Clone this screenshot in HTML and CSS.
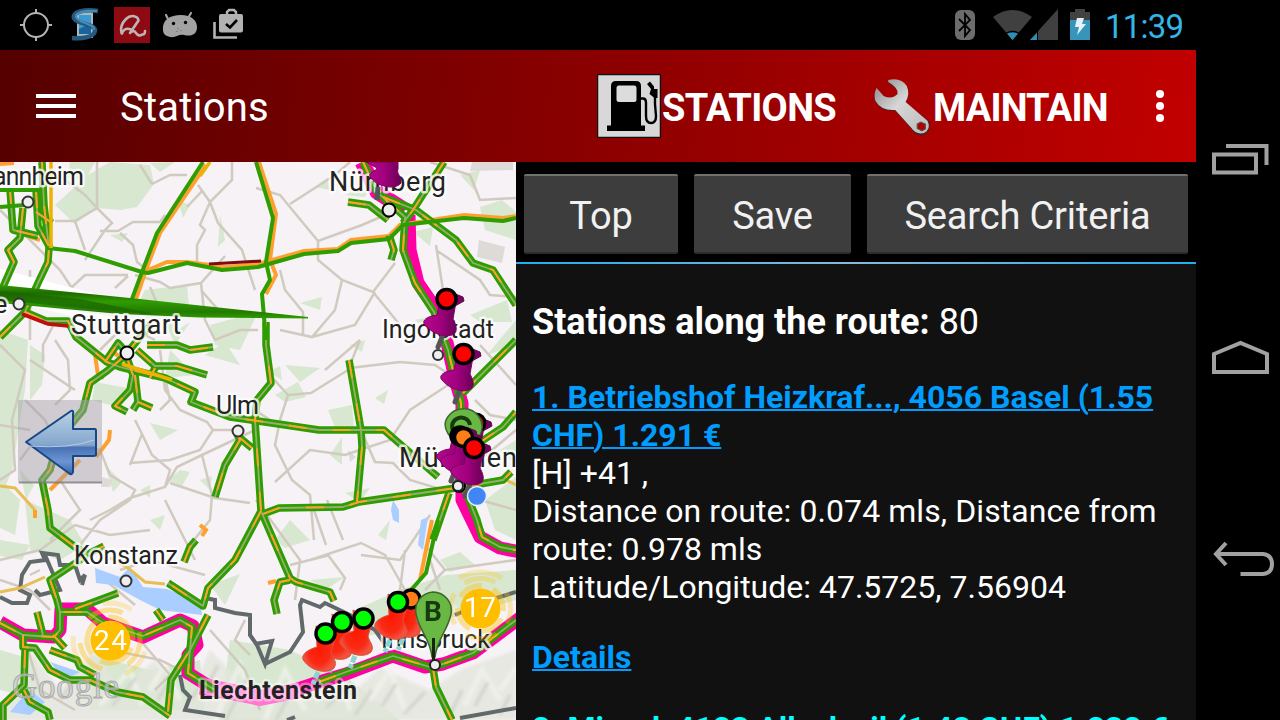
FILE: index.html
```html
<!DOCTYPE html>
<html lang="en">
<head>
<meta charset="utf-8">
<title>Stations</title>
<link rel="stylesheet" href="styles.css">
</head>
<body>
<div class="device">
  <div class="screen">
    <div class="status">
      <svg class="status-left" viewBox="0 0 260 50" width="260" height="50">
        <g fill="none" stroke="#b4b4b4" stroke-width="2"><circle cx="36" cy="25" r="12"/><path d="M36 9v5M36 36v5M20 25h5M47 25h5"/></g>
        <rect x="77" y="12" width="16" height="26" fill="#aab8c0"/><rect x="79" y="15" width="12" height="19" fill="#17659c"/><path d="M79 15h12v8l-12 6z" fill="#3d9ad0"/>
        <path d="M98 11C84 9 72 12 74 18C77 25 96 23 95 31C94 37 83 39 72 38" fill="none" stroke="#26587e" stroke-width="4.5"/>
        <path d="M97 11C84 10 75 13 76 17C79 24 95 23 94 30" fill="none" stroke="#4589b5" stroke-width="2.2"/>
        <rect x="114" y="7" width="36" height="36" fill="#8e0a12"/>
        <path d="M122 33.500L121.500 33C120 28 122 23 126 19C131 14 138 16 138.500 20.500L130 33M122 33Q125 27 131 29.500M131 32Q134 30 136 33Q139 37 142 34.500Q145 35 145 31" fill="none" stroke="#bdb5b4" stroke-width="2.600" stroke-linecap="round" stroke-linejoin="round"/>
        <path d="M163 30C162 20 170 15 181 15C191 15 197 20 197 27C197 34 192 37 184 35C178 34 176 38 170 37C166 36 163 34 163 30Z" fill="#a2a2a2"/><path d="M169 21l-3-6M188 18l3-5" stroke="#a2a2a2" stroke-width="2.2" stroke-linecap="round"/><circle cx="173.500" cy="23.500" r="1.700"/><circle cx="185.500" cy="22.500" r="1.700"/><path d="M178 28v1M181 30v1M177 31v1" stroke="#666"/>
        <rect x="219" y="14" width="24" height="18.500" rx="2" fill="#b2b2b2"/><path d="M227 15v-3l2-2h5l2 2v3" fill="none" stroke="#b2b2b2" stroke-width="2.5"/><path d="M214.500 22v15.500H237" fill="none" stroke="#b2b2b2" stroke-width="2.600"/><path d="M226 24l4 3.500L237 20" fill="none" stroke="#000" stroke-width="2.600"/>
      </svg>
      <svg class="status-right" viewBox="950 0 144 50" width="144" height="50">
        <rect x="955" y="10" width="20" height="30" rx="6" fill="#6c6c6c"/><path d="M959 19l11 11l-5 6V14l5 6l-11 11" fill="none" stroke="#000" stroke-width="1.800"/>
        <path d="M993 17Q1012 3 1032 17L1012.500 40Z" fill="#404040"/><path d="M1007 33.500Q1012.500 30.500 1018 33.500L1012.500 40Z" fill="#2b90b8"/><path d="M1006.500 33Q1012.500 30 1018.500 33" fill="none" stroke="#000" stroke-width="1.300"/>
        <path d="M1030 40L1058 9V40Z" fill="#404040"/><path d="M1030 40L1037 33V40Z" fill="#2b90b8"/><path d="M1037.500 31v10" stroke="#000"/>
        <path d="M1070 12h5V9h10v3h5v9h-20z" fill="#424242"/><path d="M1070 20h20v20h-20z" fill="#3795bb"/><path d="M1077 18h7l-2 6h4l-9 11l2-8h-4z" fill="#e4f1f6"/>
      </svg>
      <span class="clock">11:39</span>
    </div>
    <div class="toolbar">
      <svg class="menu" viewBox="0 0 40 24" width="40" height="24"><path d="M0 2h40M0 12h40M0 22h40" stroke="#fff" stroke-width="4"/></svg>
      <h1 class="title">Stations</h1>
      <div class="action">
        <svg viewBox="0 0 64 64" width="64" height="64"><rect x=".5" y=".5" width="63" height="63" fill="#d8d8d8" stroke="#111" stroke-width="1.500"/><path d="M10 51.500h4V12q0-5 5-5h20q5 0 5 5v39.500h4V57H10z"/><rect x="19.500" y="11.500" width="20" height="16.500" rx="2.500" fill="#dcdcdc"/><path d="M43 24.500h3q3 0 3 4V42q0 7 5 7t5-7l-1-12V20" fill="none" stroke="#000" stroke-width="2.400"/><path d="M50 10l3-2.500 4 5v2.500h3.500v9h-3l-5-4 1.500-5z"/></svg>
        <span class="label-stations">STATIONS</span>
      </div>
      <div class="action action-maintain">
        <svg viewBox="0 0 60 60" width="60" height="60"><defs><linearGradient id="steel" x2="1" y2="1"><stop offset=".1" stop-color="#999"/><stop offset=".45" stop-color="#d6d6d6"/><stop offset="1" stop-color="#bbb"/></linearGradient></defs><g transform="translate(-1 1) scale(1.160 1)"><path d="M14 4Q25 1 30 10Q33 18 29 26L49 44Q52 53 45 58Q37 60 34 52L20 34Q8 35 3 25Q1 18 4 12L11 21Q18 24 22 18Q23 12 14 6Z" fill="#4b2020"/><path d="M14 3Q25 0 30 9Q33 17 29 25L48 44Q51 52 45 56Q38 58 34 51L20 33Q8 34 3 24Q1 17 4 11L10 19Q17 23 22 17Q23 11 14 5Z" fill="url(#steel)"/><path d="M39 47l3-2 4 2v5l-3 2-4-2.500z" fill="#b00000" stroke="#555"/></g></svg>
        <span class="label-maintain">MAINTAIN</span>
      </div>
      <svg class="overflow" viewBox="0 0 8 32" width="8" height="32"><g fill="#fff"><circle cx="4" cy="4" r="4"/><circle cx="4" cy="16" r="4"/><circle cx="4" cy="28" r="4"/></g></svg>
    </div>
    <div class="content">
      <svg class="map" viewBox="0 162 516 558" width="516" height="558">
        <defs>
          <linearGradient id="wedge" x2="0" y2="1"><stop offset="0" stop-color="#2f9d00"/><stop offset=".25" stop-color="#1f6b00"/><stop offset=".5" stop-color="#2f9d00"/><stop offset=".8" stop-color="#237a00"/><stop offset="1" stop-color="#2f9d00"/></linearGradient>
          <linearGradient id="arrow" x2="0" y2="1"><stop offset="0" stop-color="#b9d3e6"/><stop offset=".54" stop-color="#84a5cc"/><stop offset=".58" stop-color="#4972b4"/><stop offset=".8" stop-color="#6d95d6"/><stop offset="1" stop-color="#3a66ac"/></linearGradient>
          <linearGradient id="purple"><stop offset="0" stop-color="#b3098d"/><stop offset=".5" stop-color="#a3007f"/><stop offset="1" stop-color="#6a0053"/></linearGradient>
          <radialGradient id="red"><stop offset="0" stop-color="#ff1800"/><stop offset=".7" stop-color="#f92a16"/><stop offset="1" stop-color="#f2513d"/></radialGradient>
          <filter id="relief"><feGaussianBlur stdDeviation="1.500"/></filter>
          <g id="roads">
            <path d="M25 312L46 321L68 321L76 337L107 362L120 367L165 378L195 392L191 402L230 417L258 421L319 430L384 430L438 477"/>
            <path d="M127 354L107 371L90 383L83 410L58 440L50 470L42 480L48 510L50 528L75 547L88 554L104 546"/>
            <path d="M86 556L50 580L57 600L60 612M147 345L177 345L190 350L213 347M137 350L155 366L177 366L207 375M127 358L133 375L130 390L115 406L127 412M135 375L138 402L133 410M138 402L152 408M105 362L118 343L127 353L150 325M150 378L155 368"/>
            <path d="M237 434L240 440L225 465L215 497M240 438L252 448"/>
            <path d="M266 322L266 345L271 383L257 400L255 420L261 511L290 578L296 582L330 592L334 601M290 580L280 582L274 600L277 614M261 511L235 560L208 588L203 606L168 583"/>
            <path d="M208 615L190 650L171 680L168 712M263 514L279 508L343 507L359 502L456 488M349 360L361 430L362 447L357 502"/>
            <path d="M463 393L476 380L516 340M479 443L503 427L516 412M463 487L503 480L511 472M449 493L433 540M389 235L394 250L391 260M383 197L416 210L456 240L473 263L493 270L516 305M348 202L369 205L388 220"/>
            <path d="M444 162L413 210L403 223M363 162L377 192L405 217L403 250L415 283L434 312L448 350L456 383L461 403L461 480L477 520L482 537L500 547L516 550"/>
            <path d="M0 623L23 635L54 637L60 630L60 612L87 612L103 623L143 636L180 620L192 627L188 673L215 690M319 682L346 672L393 656L430 667L443 664L473 653L516 620M433 668L436 687L452 720"/>
            <path d="M23 635L23 647L35 648L50 670L70 680L90 680L117 692L143 697L170 716M25 650L24 685L3 705V720M24 690L30 702L48 712L50 720M50 650L77 660L80 667L95 675M37 612L43 635M53 635L65 648M75 609L118 593M156 610L163 620M184 562L190 547L196 540"/>
            <path d="M23 208L20 238L8 250L14 262L3 287M42 162L44 205L49 248L48 262L38 283L25 312L0 337M36 190L38 226L50 248M36 212L52 223M10 190L13 230L38 236"/>
          </g>
          <g id="single">
            <path d="M203 162L157 233L142 272L132 299M48 248L75 251L142 272L148 273L187 263L222 270L258 267L304 254L338 251L351 243L389 239L403 225L464 218L503 221L516 218M256 162L273 218L266 262L270 280L262 294L266 340M0 190H42M0 207L25 205M438 520L426 573L411 590"/>
          </g>
          <g id="pin">
            <path d="M-4 36L-9 48" stroke="#555" stroke-width="5" stroke-linecap="round"/>
            <path d="M-7 2L-10 16C-20 17 -26 22 -22 26C-14 36 2 40 8 34C11 30 8 24 6 20L9 3Z" fill="url(#purple)" stroke="#7d0063"/>
            <path d="M6-6L16-2L17 2L8 7Z" fill="#7d0063" stroke="#52103f"/>
          </g>
          <g id="redpin">
            <path d="M-8 38L-13 50" stroke="#8ad5cf" stroke-width="5" stroke-dasharray="7 2"/>
            <path d="M-10-8L-9 13C-20 16 -26 22 -22 27C-14 38 2 40 8 34C12 28 6 24 5 18L10 2Z" fill="url(#red)" stroke="#d85038"/>
          </g>
        </defs>
        <rect y="162" width="516" height="558" fill="#f6f2f6"/>
        <g fill="#d7e7d0">
          <path d="M70 162L95 162 85 180 68 178ZM88 175L110 162 150 165 154 184 137 207 120 210 97 208 75 224 55 205ZM145 290L187 285 190 318 140 300ZM0 330L28 340 25 390 12 470 0 500ZM0 480L20 500 15 535 0 528ZM178 200L190 205 183 218ZM220 215L225 240 218 247ZM170 350L195 375 165 378ZM210 325L258 312 240 350 215 345Z"/>
          <path d="M95 382L128 388 110 405 92 400ZM150 423L178 430 160 440ZM180 470L190 472 182 486 168 480ZM105 465L122 482 113 492ZM25 500L70 520 85 545 60 560 30 550ZM140 490L150 485 150 498ZM205 355L225 342 240 365ZM285 365L320 368 300 382ZM275 395L298 382 306 397 285 402ZM328 410L352 405 354 430 335 427ZM330 455L342 437 342 465ZM375 398L388 390 384 404ZM345 493L370 488 360 502ZM378 535L390 520 386 540ZM315 187L327 178 330 190ZM300 303L322 297 320 310ZM345 195L370 185 365 197ZM470 315L507 300 512 322 480 322ZM487 355L516 320 516 345ZM485 500L516 477 516 540 495 530Z"/>
          <path d="M460 175L480 170 474 190ZM480 207L502 200 516 212 516 240 485 230ZM413 232L433 227 430 246ZM500 450L516 440 516 465ZM275 540L290 520 310 540 285 548ZM310 580L345 577 325 590ZM355 610L400 590 446 575 516 570 516 600 475 612 350 640ZM210 585L240 574 225 605ZM0 650L35 660 45 700 0 690ZM90 655L150 670 200 660 205 710 90 710ZM230 640L290 650 350 680 400 720 220 720Z"/>
          <path d="M30 345L45 355 42 385 30 400ZM20 470L34 485 26 500ZM158 305L178 330 190 322 175 345ZM120 188L140 190 130 205ZM110 235L128 233 122 242ZM150 163L175 162 160 172ZM268 372L280 366 282 380ZM350 345L365 340 362 352ZM0 540L30 545 22 560 0 556ZM150 520L165 515 160 530ZM200 480L212 476 210 490ZM415 320L425 318 424 328ZM440 560L460 552 475 565 450 572Z"/>
        </g>
        <g fill="#dddad8"><path d="M472 162H513V170L470 171ZM479 240L505 247 502 263 477 257ZM102 477L112 480 110 487H101ZM348 450L356 457 350 462Z"/></g>
        <g filter="url(#relief)">
          <path d="M0 715L30 650 60 690 95 650 120 690 155 660 185 705 210 650 250 690 300 680 350 695 380 668 430 690 460 670 516 650V720H0Z" fill="#e3e6dc" opacity=".8"/>
          <path d="M100 705L130 670 142 705M150 690L165 665 180 700M215 720L240 665 252 705M265 720L285 670 305 710M315 700L342 680 350 710M370 700L390 670 405 710M465 705L482 670 500 700M420 620L450 605 480 630M500 690L516 668" fill="none" stroke="#f4f4ef" stroke-width="5" opacity=".7"/>
          <path d="M112 706L136 678M158 700L172 675M226 720L246 680M276 720L295 685M326 708L346 688M382 706L396 684M475 706L488 682M404 714L425 692M205 690L218 665M355 715L372 690M450 715L462 690M500 715L510 695M60 700L75 680M190 700L205 680" fill="none" stroke="#d0d2ca" stroke-width="3"/>
        </g>
        <g fill="none" stroke="#d0cabf" stroke-width="2.500">
          <path d="M97 162V208L75 221H55M97 208L112 223 105 230 85 260M60 221L75 221 85 250M120 233L133 245 137 262 150 272M100 231H118L133 222H160L165 215M152 184L170 175H187M152 184L140 165M232 162V180L210 202 198 185M210 202L218 223 242 250 255 290M210 202L200 225 205 230 197 245V267M187 207L203 190M60 298L85 275H128M128 276L115 288M135 275L160 282 170 288 201 283 225 256M201 283L205 320 215 340 240 330H258M201 290L220 312M150 287L160 310M55 322L43 345V362"/>
          <path d="M0 210L60 270 80 300M30 270V340M0 345L25 370 12 420 15 470 0 480M55 340L68 360 70 390 55 405M100 350L115 335 135 330 155 340M160 350L165 390 180 410 207 422 213 430 200 450 170 460 130 463M165 378L170 400 160 410M135 420L142 434 130 465M142 434L152 455 170 470 165 487M213 430H235M255 430L202 455 177 467 165 487 130 498 110 510 90 520M202 455L212 495 210 520 190 545M170 483L215 498 250 503M165 500L195 560M110 475L135 490 130 500 100 520 80 545M60 440L100 450 110 475M55 450L35 440 20 460M25 400L45 420 60 450M60 480L80 510 50 540M0 560L40 550 75 525 110 535 150 530"/>
          <path d="M256 188L280 195 318 241 362 225 390 213M290 204L335 175 350 162M318 241V260L342 280 373 292 395 263M342 280L335 310 312 337 280 330M280 270L285 290 303 312V335M373 292L400 325M436 245L443 290 455 325M436 250L480 280 490 295 516 297M430 162L470 175 480 200 516 198M375 292L355 325 312 337M270 375L288 395 311 393 348 370 360 340M288 395L280 420 275 445 292 480 310 495 314 540M350 368L400 362 435 365 450 375M360 340L325 370M448 385L410 410 390 440 345 455 310 450 275 482M361 430L375 462 393 463 410 480 450 492"/>
          <path d="M327 500L343 540M256 500L300 560 295 600M314 510L326 545M310 560L361 543 385 555 405 590M361 555L400 560 430 515M290 565L330 555M328 555L345 578 340 590M405 550L400 590 440 605M425 545L445 570 425 590M445 570L516 560M480 460L516 430M475 400L490 415 516 420M480 345L516 385M480 500L516 510M65 180L85 195 97 208M30 360L75 390M0 425L30 430M270 420L255 410"/>
          <path d="M120 570L150 560 205 575M0 580L30 590 50 610M30 575L40 570M105 580L135 605M25 640L40 690 75 710M110 650L160 660 190 675M140 640L170 675 155 690M210 630L245 670 260 710M245 620L235 640 250 655M430 560L440 590"/>
        </g>
        <g fill="#a9ceff"><path d="M95 568L120 577 130 567 143 587 167 589 201 603 202 615 160 610 140 600 113 585 96 583ZM30 690L20 700 10 712 30 715 45 702ZM50 662L80 672 65 680ZM393 500L399 510 399 523 393 520 391 510ZM421 520L428 517 423 550 418 545Z"/></g>
        <g fill="none" stroke="#61696a" stroke-width="4">
          <path d="M0 597L12 603H27L30 595 20 590 22 575 30 562 45 560 42 553 58 555 60 565 75 565 80 580 85 575 82 585M45 555L60 590 40 595 35 590M205 598L215 600 215 608 235 613 250 615 250 635 257 645M180 675L183 690 190 697 185 710 225 716M257 645L265 664 272 641 255 644M265 664L290 652 303 632 300 605 302 600 320 607 325 603 350 615 375 630 385 644M455 615L490 600 516 592M460 718L516 708M287 720L295 717"/>
        </g>
        <g fill="none" stroke="#e7bd55" stroke-width="3"><path d="M0 486L15 488 35 510M0 592L20 588 45 577M110 558L128 568 145 582 165 584M500 477L516 485"/></g>
        <path d="M0 269L100 295L0 286ZM20 304L150 321L90 320Z" fill="#fff"/>
        <g fill="none" stroke="#ff00a2" stroke-width="13" stroke-linejoin="round">
          <path d="M362 162L377 192L405 210" stroke-width="15"/><path d="M409 215L410 250L418 283L438 312"/><path d="M446 338L456 383L462 403V470L462 500L480 537L500 548L520 552"/>
          <path d="M0 622L23 635L54 637L60 630L61 609L87 609L103 623L143 637L180 620L193 626L197 645L188 655L188 673L215 690"/><path d="M200 688L260 698L295 690L319 682L346 674L393 656L425 667L443 664L473 653L520 618"/><path d="M205 686L260 698L300 690" stroke="#ff77cf" stroke-width="16"/>
        </g>
        <g fill="none" stroke="#ff9f2d" stroke-width="4">
          <path d="M206 165L160 233L146 270L136 299M148 270L167 262 187 262 225 267 258 264 304 251 338 249 351 240 389 236 400 225 464 215 503 218 516 216M259 162L276 214 270 260 276 275 266 294M0 164L14 163M40 240L10 230M24 212L22 235M95 355L98 375 104 378M110 350L120 357M110 430L109 440 96 457M80 460L50 490M35 510V518M432 520L420 580M200 525L206 530 202 536M190 547L196 542M268 583L276 581"/>
        </g>
        <use href="#roads" class="road-edge"/>
        <use href="#roads" class="road-core"/>
        <use href="#roads" class="road-dash"/>
        <use href="#single" class="road-single"/>
        <path d="M51 162L51 248M122 364L172 380M210 162L200 176" fill="none" stroke="#edb300" stroke-width="3.500"/>
        <path d="M22 314L48 324L68 326" fill="none" stroke="#c00d0d" stroke-width="3.500"/><path d="M209 264L261 261" stroke="#7c0b12" stroke-width="3"/>
        <path d="M0 285L130 298L308 317L308 318.500L200 317.500L120 314L0 303Z" fill="url(#wedge)"/>
        <path d="M0 291L80 299L160 315L80 308L0 300Z" fill="#1b6500" opacity=".7"/>
        <path d="M107 354L130 300" stroke="none"/>
        <g class="town"><circle cx="28" cy="202" r="5.500"/><circle cx="19" cy="304" r="5.500"/><circle cx="127" cy="353" r="6.500" stroke="#000"/><circle cx="238" cy="431" r="5.500"/><circle cx="389" cy="210" r="6.500" stroke="#000"/><circle cx="438" cy="355" r="5"/><circle cx="126" cy="581" r="5.500"/><circle cx="459" cy="486" r="6" stroke="#000"/></g>
        <g class="place">
          <text x="-28" y="185" textLength="112">Mannheim</text><text x="-6" y="313">e</text><text x="71" y="334" textLength="110" class="large">Stuttgart</text><text x="216" y="414" textLength="43">Ulm</text>
          <text x="329" y="191" textLength="117" class="large">Nürnberg</text><text x="382" y="338" textLength="112">Ingolstadt</text><text x="399" y="467" textLength="118" class="large">München</text><text x="74" y="564" textLength="104">Konstanz</text><text x="381" y="648" textLength="109">Innsbruck</text><text x="199" y="699" textLength="158" class="country">Liechtenstein</text>
        </g>
        <text x="12" y="698" textLength="107" class="google">Google</text>
        <g fill="none" stroke="#ffc107" stroke-width="5" opacity=".4">
          <circle cx="110" cy="640" r="23" stroke-dasharray="38 11" transform="rotate(20 110 640)"/><circle cx="110" cy="640" r="30" stroke-dasharray="36 27" transform="rotate(-15 110 640)"/><circle cx="110" cy="640" r="37" stroke-dasharray="30 47" transform="rotate(20 110 640)" opacity=".6"/>
          <circle cx="480.500" cy="608.500" r="23" stroke-dasharray="25 12" transform="rotate(25 480.500 608.500)"/><circle cx="480.500" cy="608.500" r="30" stroke-dasharray="32 15.100" transform="rotate(-122 480.500 608.500)" opacity=".7"/><path d="M459 578Q480 566 502 578" opacity=".6"/>
        </g>
        <g fill="#ffbe00"><circle cx="110.500" cy="640.500" r="20"/><circle cx="480.500" cy="608.500" r="20"/></g>
        <g class="cluster"><text x="94" y="650" textLength="33">24</text><text x="464" y="617" textLength="32">17</text></g>
        <path d="M378 187L377 200" stroke="#555" stroke-width="5"/><path d="M366 162H398V169C396 174 402 176 401 183C395 191 376 186 370 177C368 171 376 172 377 168Z" fill="url(#purple)" stroke="#7d0063"/>
        <use href="#pin" x="447" y="299"/><use href="#pin" x="464" y="354"/>
        <use href="#pin" x="475" y="424"/><circle cx="476" cy="423" r="9" fill="#b40000" stroke="#000" stroke-width="3"/>
        <path d="M461 409A18 18 0 0 1 480 435L456 443Q442 430 446 420Q451 410 461 409Z" fill="#69b843" stroke="#3d652e" stroke-width="1.500"/><path d="M470 425A9 9 0 1 0 458 435" fill="none" stroke="#173b10" stroke-width="4"/>
        <use href="#pin" x="460" y="433"/><use href="#pin" x="464" y="438"/><circle cx="460" cy="436" r="9" class="dot"/><circle cx="463.500" cy="437.500" r="9" class="dot" fill="#ff7e1a"/><use href="#pin" x="474" y="448"/>
        <circle cx="458" cy="486" r="5" fill="#eee" stroke="#222" stroke-width="2"/>
        <g fill="#f00" class="dot"><circle cx="446.500" cy="299" r="9.500"/><circle cx="463.500" cy="354" r="9.500"/><circle cx="474" cy="448" r="9.500"/></g>
        <circle cx="477" cy="496" r="9.500" fill="#4285f4" stroke="#e5f0ff" stroke-width="1.500"/>
        <use href="#redpin" x="411" y="600"/><circle cx="411" cy="599" r="9" fill="#ff7e1a" class="dot"/><use href="#redpin" x="398" y="602"/>
        <use href="#redpin" x="342" y="622"/><use href="#redpin" x="363" y="618"/><use href="#redpin" x="326" y="634"/>
        <g fill="#0f0" class="dot"><circle cx="398" cy="602" r="9.500"/><circle cx="342" cy="622" r="9.500"/><circle cx="363.500" cy="618.500" r="9.500"/><circle cx="325.500" cy="633.500" r="9.500"/></g>
        <path d="M433 592A18.500 18.500 0 0 1 451 614C448 630 437 639 435 657H432C430 638 419 631 416 614A18.500 18.500 0 0 1 433 592Z" fill="#69b843" stroke="#3d652e" stroke-width="1.500"/><path d="M433.500 638V660" stroke="#17240f" stroke-width="3"/><circle cx="435" cy="665" r="5" fill="#eee" stroke="#222" stroke-width="2"/><text x="433" y="621" class="marker">B</text>
        <rect x="18" y="400" width="84" height="83" rx="1" fill="#a7a3aa" opacity=".5"/><path d="M19 482.500H102" stroke="#77777a" stroke-width="2" opacity=".7"/>
        <path d="M26 442L71 411Q74 410 73 414V429H95Q96 429 96 431V455Q95 456 93 456H73V472Q72 475 70 474Z" fill="url(#arrow)" stroke="#174885" stroke-width="2" stroke-linejoin="round"/><path d="M29 446Q70 449 94 440" stroke="#b6ceea" fill="none"/>
      </svg>
      <div class="panel">
        <div class="buttons"><div class="btn btn-top">Top</div><div class="btn btn-save">Save</div><div class="btn btn-search">Search Criteria</div></div>
        <div class="list">
          <p class="heading"><b>Stations along the route:</b> 80</p>
          <a class="link">1. Betriebshof Heizkraf..., 4056 Basel (1.55<br>CHF) 1.291 €</a>
          <p class="info">[H] +41 ,<br><span class="distance">Distance on route: 0.074 mls, Distance from</span><br>route: 0.978 mls<br>Latitude/Longitude: 47.5725, 7.56904</p>
          <a class="link details">Details</a>
          <a class="link next">2. Migrol, 4123 Allschwil (1.48 CHF) 1.232 €</a>
        </div>
      </div>
    </div>
  </div>
  <div class="navbar">
    <svg viewBox="1196 0 84 720" width="84" height="720"><g fill="none" stroke="#a1a1a1" stroke-width="4"><path d="M1214 154.500h42v18h-42zM1226 146h40.500v19M1214 354l26.500-11L1267 354v18h-53zM1216 554h47q9 1 9 10t-9 10h-22.500M1226 543l-10 11l10 11"/></g></svg>
  </div>
</div>
</body>
</html>
```
FILE: styles.css
```css
* { box-sizing: border-box; }
body { margin: 0; background: #000; color: #fff; font-family: Roboto, sans-serif; overflow: hidden; }
.device { display: flex; width: 1280px; height: 720px; overflow: hidden; }
.screen { display: flex; flex-direction: column; width: 1196px; height: 720px; }
.navbar { width: 84px; }
svg { display: block; flex: none; }
.status { display: flex; height: 50px; flex: none; }
.status-right { margin-left: 690px; }
.clock { margin-left: 11px; font-size: 33px; line-height: 53px; letter-spacing: -.8px; color: #33b5e5; }
.toolbar { display: flex; align-items: center; height: 112px; flex: none; padding-left: 36px; background: linear-gradient(97deg, #550000, #c20000); }
.title { margin: 2px 0 0 44px; width: 477px; font-size: 40px; font-weight: 400; letter-spacing: .25px; }
.action { display: flex; align-items: center; font-size: 38px; font-weight: 700; width: 275px; white-space: nowrap; }
.action span { margin-top: 3px; }
.label-stations { margin-left: 1px; letter-spacing: -.65px; }
.label-maintain { letter-spacing: -.85px; }
.action-maintain { width: 284px; padding-left: 1px; }
.content { display: flex; height: 558px; }
.map { font-family: Roboto, sans-serif; }
.road-edge, .road-core, .road-dash, .road-single { fill: none; stroke-linejoin: round; }
.road-edge { stroke: #2f9d00; stroke-width: 7.5px; }
.road-core { stroke: #95ae70; stroke-width: 1.8px; }
.road-dash { stroke: #ff9f2d; stroke-width: 2px; stroke-dasharray: 18px 26px; }
.road-single { stroke: #2f9d00; stroke-width: 4px; }
.town { fill: #eee; stroke: #333; stroke-width: 2px; }
.place { font-size: 25px; fill: #222; stroke: #fff; stroke-opacity: .75; stroke-width: 5px; paint-order: stroke; stroke-linejoin: round; }
.large { font-size: 27px; }
.country { font-weight: 700; stroke-opacity: .4; }
.google { font-family: "Liberation Serif", serif; font-size: 35px; fill: #ccc; fill-opacity: .6; stroke: #aaa; stroke-width: 1px; }
.cluster { font-size: 28px; fill: #fff; }
.marker { font-size: 28px; font-weight: 700; text-anchor: middle; fill: #173b10; }
.dot { stroke: #000; stroke-width: 3.5px; }
.panel { width: 680px; background: #111; overflow: hidden; }
.buttons { display: flex; gap: 16px; height: 102px; padding: 12px 8px 8px; background: #000; border-bottom: 2px solid; border-image: linear-gradient(90deg, #22acf0, #87b9d5, #22acf0) 1; }
.btn { height: 80px; border-radius: 2px; border-top: 2px solid #707070; border-bottom: 2px solid #2c2c2c; background: #3d3d3d; color: #f1f1f1; font-size: 38px; line-height: 80px; letter-spacing: -.15px; text-align: center; white-space: nowrap; }
.btn-top { width: 154px; }
.btn-save { width: 157px; }
.btn-search { width: 321px; }
.list { padding: 35px 16px 0; font-size: 32px; line-height: 38px; white-space: nowrap; }
.heading { margin: 0 0 33px; font-size: 36px; line-height: 46px; }
.link { display: block; color: #009dff; font-weight: 700; text-decoration: underline; text-decoration-thickness: 2px; }
.info { margin: 0; }
.distance { letter-spacing: .08px; }
.details { margin-top: 32px; }
.next { margin-top: 33px; color: #0ff; }
```
